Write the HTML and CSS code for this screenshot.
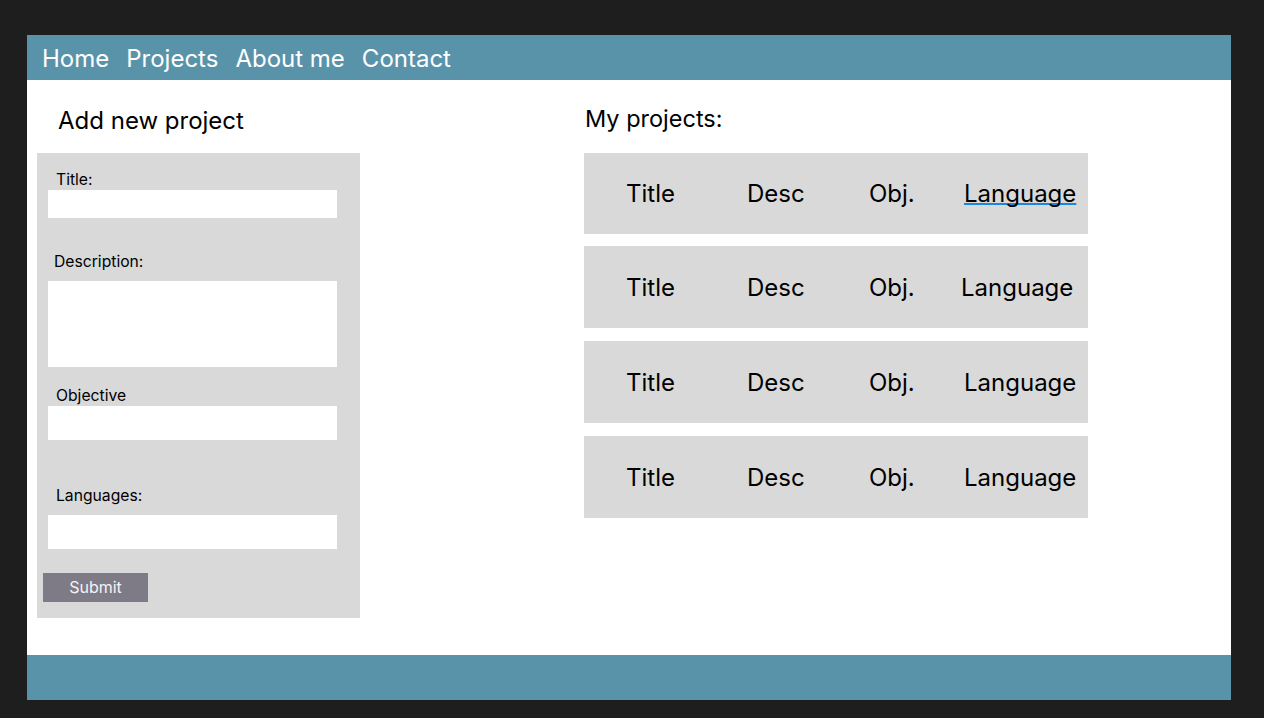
FILE: index.html
```html
<!DOCTYPE html>
<html lang="en">
<head>
<meta charset="utf-8">
<title>Projects</title>
<link rel="stylesheet" href="styles.css">
</head>
<body>
<div class="frame">
  <nav class="nav">
    <a class="nav-link" href="#">Home</a>
    <a class="nav-link" href="#">Projects</a>
    <a class="nav-link" href="#">About me</a>
    <a class="nav-link" href="#">Contact</a>
  </nav>
  <main class="main">
    <section class="left">
      <h2 class="heading heading-left">Add new project</h2>
      <form class="panel">
        <label class="label label-title">Title:</label>
        <div class="field field-title"></div>
        <label class="label label-desc">Description:</label>
        <div class="field field-desc"></div>
        <label class="label label-obj">Objective</label>
        <div class="field field-obj"></div>
        <label class="label label-lang">Languages:</label>
        <div class="field field-lang"></div>
        <button class="submit" type="button">Submit</button>
      </form>
    </section>
    <section class="right">
      <h2 class="heading heading-right">My projects:</h2>
      <div class="list">
        <div class="card">
          <span class="cell">Title</span><span class="cell">Desc</span><span class="cell">Obj.</span><span class="cell"><span class="spell">Language</span></span>
        </div>
        <div class="card card-shift">
          <span class="cell">Title</span><span class="cell">Desc</span><span class="cell">Obj.</span><span class="cell">Language</span>
        </div>
        <div class="card">
          <span class="cell">Title</span><span class="cell">Desc</span><span class="cell">Obj.</span><span class="cell">Language</span>
        </div>
        <div class="card">
          <span class="cell">Title</span><span class="cell">Desc</span><span class="cell">Obj.</span><span class="cell">Language</span>
        </div>
      </div>
    </section>
  </main>
  <footer class="footer"></footer>
</div>
</body>
</html>
```

FILE: styles.css
```css
* { box-sizing: border-box; }

html, body {
  margin: 0;
  background: #1e1e1e;
}

body {
  padding: 35px 33px 18px 27px;
  font-family: Inter, "Noto Sans", sans-serif;
  color: #000;
}

.frame {
  width: 1204px;
  height: 665px;
  background: #fff;
  display: flex;
  flex-direction: column;
}

.nav {
  height: 45px;
  background: #5993aa;
  display: flex;
  align-items: center;
  padding: 1px 0 0 15px;
}

.nav-link {
  color: #fff;
  text-decoration: none;
  font-size: 24px;
  line-height: 29px;
  margin-right: 17px;
}

.main {
  flex: 1;
  display: flex;
  padding-left: 10px;
}

.left {
  width: 323px;
  display: flex;
  flex-direction: column;
}

.heading {
  margin: 0;
  font-weight: 400;
  font-size: 24px;
  line-height: 29px;
}

.heading-left {
  margin-top: 26px;
  padding-left: 21px;
  height: 47px;
}

.panel {
  height: 465px;
  background: #d9d9d9;
  display: flex;
  flex-direction: column;
  align-items: flex-start;
  padding: 18px 0 0 11px;
}

.label {
  font-size: 15.7px;
  line-height: 18px;
  height: 18px;
  padding-left: 8px;
}

.label-title { margin-bottom: 1px; }
.label-desc { margin-top: 35px; padding-left: 6px; margin-bottom: 10px; }
.label-obj { margin-top: 20px; margin-bottom: 1px; }
.label-lang { margin-top: 47px; margin-bottom: 10px; }

.field {
  width: 289px;
  background: #fff;
}

.field-title { height: 28px; }
.field-desc { height: 86px; }
.field-obj { height: 34px; }
.field-lang { height: 34px; }

.submit {
  margin: 24px 0 0 -5px;
  width: 105px;
  height: 29px;
  border: 0;
  padding: 0;
  background: #7e7a86;
  color: #f4f4f4;
  font-family: Inter, "Noto Sans", sans-serif;
  font-size: 16px;
  line-height: 19px;
}

.right {
  margin-left: 224px;
  display: flex;
  flex-direction: column;
}

.heading-right {
  margin-top: 24px;
  padding-left: 1px;
  height: 49px;
  font-size: 23.5px;
}

.list {
  display: flex;
  flex-direction: column;
  gap: 13px;
}

.card {
  width: 504px;
  height: 82px;
  background: #d9d9d9;
  display: grid;
  grid-template-columns: 121px 122px 95px auto;
  align-items: center;
  padding-left: 42px;
  font-size: 24px;
  line-height: 29px;
}

.card:first-child { height: 81px; }

.list .card:nth-child(2) { margin-top: -1px; }

.card-shift { grid-template-columns: 121px 122px 92px auto; }

.spell {
  text-decoration: underline;
  text-decoration-color: #1b86e2;
  text-decoration-thickness: 2px;
  text-underline-offset: 1px;
  text-decoration-skip-ink: none;
}

.footer {
  height: 45px;
  background: #5993aa;
}
```
